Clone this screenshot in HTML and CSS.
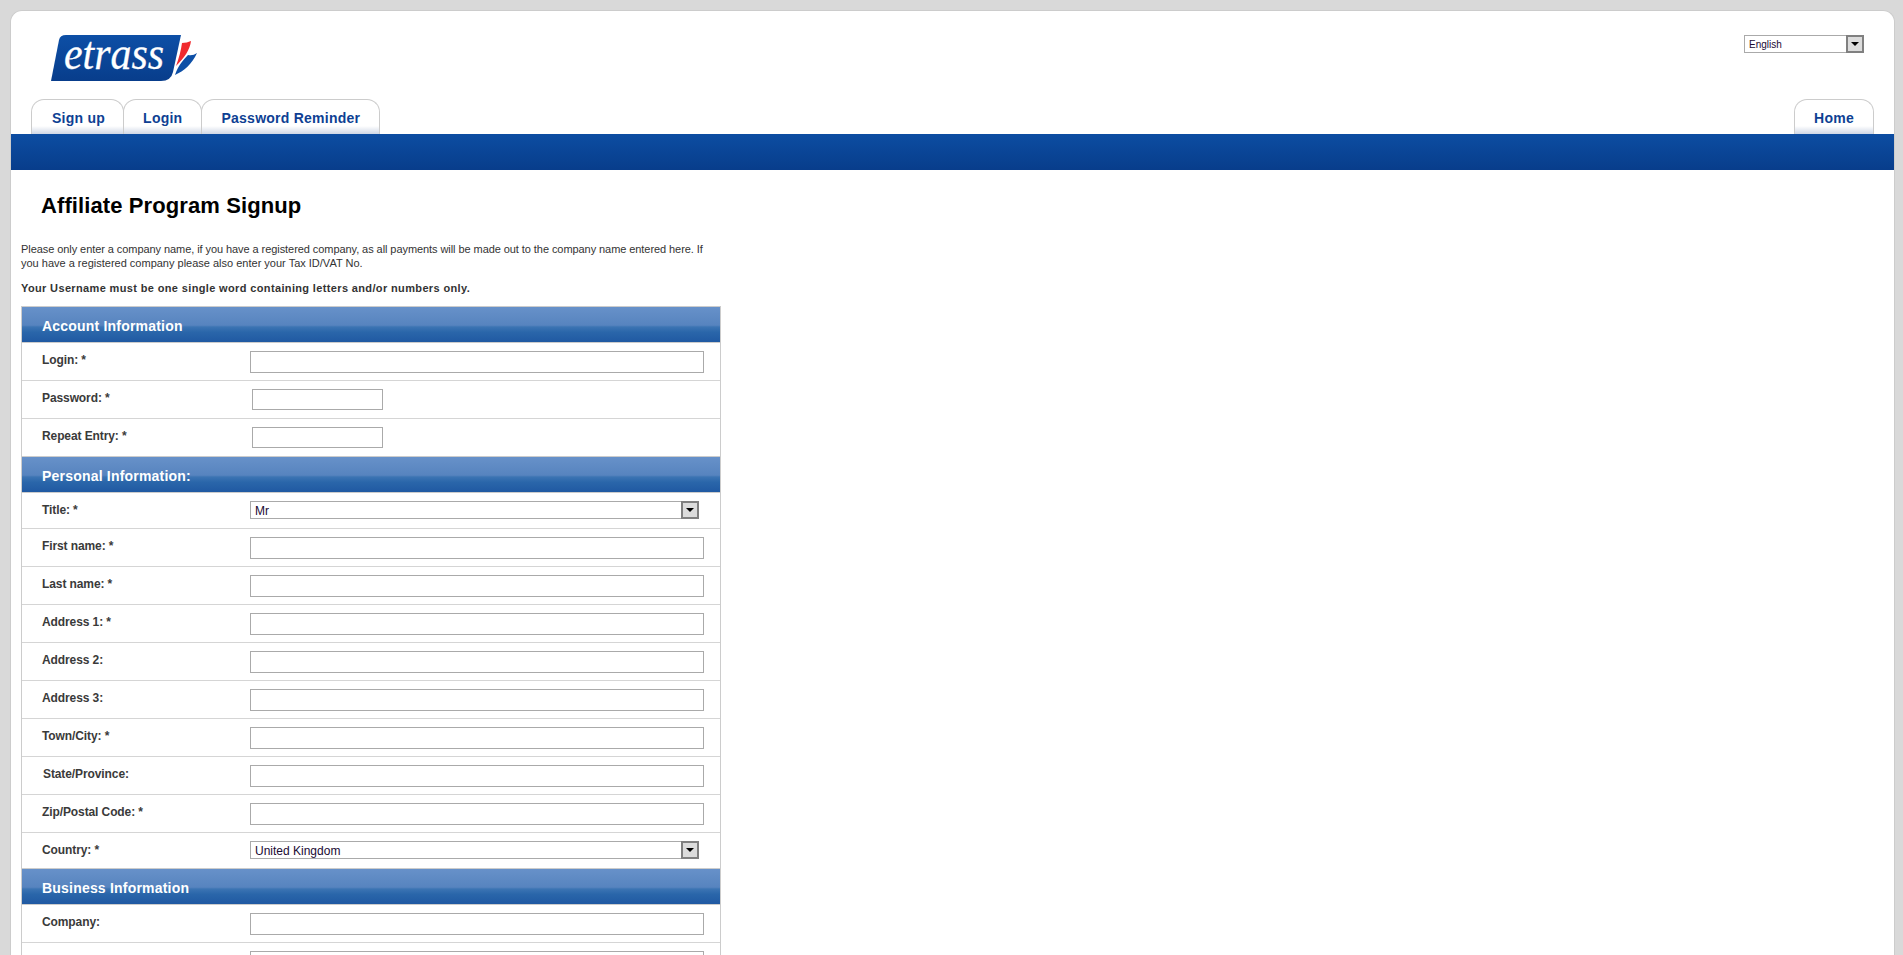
FILE: index.html
```html
<!DOCTYPE html>
<html lang="en">
<head>
    <meta charset="utf-8">
    <title>Affiliate Program Signup</title>
    <link rel="stylesheet" href="styles.css">
</head>

<body>
<div class="page">
    <div class="header">
        <div class="headerTop">
            <a class="logo" href="#">
                <svg width="147" height="60" viewBox="0 -10 147 60">
                    <defs>
                        <linearGradient id="logoBlue" x1="0" y1="0" x2="0" y2="1">
                            <stop offset="0" stop-color="#0d4fa6"/>
                            <stop offset="1" stop-color="#083d8b"/>
                        </linearGradient>
                    </defs>
                    <path d="M0 47 L8 6 Q9 1 15 1 L130 1 L122 38 Q120 47 110 47 Z" fill="url(#logoBlue)"/>
                    <text x="13" y="35" class="logoText" textLength="100" lengthAdjust="spacingAndGlyphs">etrass</text>
                    <path d="M125 32 C128 24 130 16 131 9 Q136 9 140 7 C139 16 133 24 125 32 Z" fill="#f02a2e"/>
                    <path d="M124 41 C127 32 132 26 137 21 Q142 22 146 19 C141 30 133 37 124 41 Z" fill="#0d4fa6"/>
                </svg>
            </a>
            <div class="selectBox langSelect">
                <select>
                    <option>English</option>
                </select>
                <span class="selectArrow"></span>
            </div>
        </div>
        <div class="tabs">
            <a class="tab" href="#">Sign up</a>
            <a class="tab" href="#">Login</a>
            <a class="tab" href="#">Password Reminder</a>
            <a class="tab tabHome" href="#">Home</a>
        </div>
    </div>
    <div class="band"></div>

    <div class="content">
        <h1>Affiliate Program Signup</h1>
        <p class="intro">Please only enter a company name, if you have a registered company, as all payments will be made out to the company name entered here. If you have a registered company please also enter your Tax ID/VAT No.</p>
        <p class="intro introBold">Your Username must be one single word containing letters and/or numbers only.</p>

        <form class="signup">
            <h2>Account Information</h2>
            <div class="row">
                <label for="login">Login: *</label>
                <input type="text" id="login">
            </div>
            <div class="row">
                <label for="password">Password: *</label>
                <input type="password" id="password" class="short">
            </div>
            <div class="row lastRow">
                <label for="repeat">Repeat Entry: *</label>
                <input type="password" id="repeat" class="short">
            </div>

            <h2>Personal Information:</h2>
            <div class="row rowSelect">
                <label for="title">Title: *</label>
                <div class="selectBox">
                    <select id="title">
                        <option>Mr</option>
                    </select>
                    <span class="selectArrow"></span>
                </div>
            </div>
            <div class="row">
                <label for="first">First name: *</label>
                <input type="text" id="first">
            </div>
            <div class="row">
                <label for="last">Last name: *</label>
                <input type="text" id="last">
            </div>
            <div class="row">
                <label for="addr1">Address 1: *</label>
                <input type="text" id="addr1">
            </div>
            <div class="row">
                <label for="addr2">Address 2:</label>
                <input type="text" id="addr2">
            </div>
            <div class="row">
                <label for="addr3">Address 3:</label>
                <input type="text" id="addr3">
            </div>
            <div class="row">
                <label for="town">Town/City: *</label>
                <input type="text" id="town">
            </div>
            <div class="row">
                <label for="state" class="nudge">State/Province:</label>
                <input type="text" id="state">
            </div>
            <div class="row">
                <label for="zip">Zip/Postal Code: *</label>
                <input type="text" id="zip">
            </div>
            <div class="row rowSelect lastRow">
                <label for="country">Country: *</label>
                <div class="selectBox">
                    <select id="country">
                        <option>United Kingdom</option>
                    </select>
                    <span class="selectArrow"></span>
                </div>
            </div>

            <h2>Business Information</h2>
            <div class="row">
                <label for="company">Company:</label>
                <input type="text" id="company">
            </div>
            <div class="row">
                <label></label>
                <input type="text">
            </div>
        </form>
    </div>
</div>
</body>
</html>
```

FILE: styles.css
```css
html, body {
    height: 955px;
    overflow: hidden;
}

body {
    margin: 0;
    padding: 10px 8px 0 10px;
    box-sizing: border-box;
    background-color: #d9d9d9;
    font-family: "Liberation Sans", Arial, sans-serif;
    color: #333333;
}

.page {
    background-color: #ffffff;
    border: 1px solid #cccccc;
    border-bottom: none;
    border-radius: 12px 12px 0 0;
    min-height: 1200px;
}

.header {
    display: flex;
    flex-direction: column;
    height: 123px;
}

.headerTop {
    display: flex;
    flex: 1;
    justify-content: space-between;
    align-items: flex-start;
    padding: 23px 30px 0 40px;
}

.logo {
    display: block;
    height: 60px;
    margin-top: -10px;
}

.logoText {
    font-family: "Liberation Serif", serif;
    font-style: italic;
    font-size: 47px;
    fill: #ffffff;
    stroke: #ffffff;
    stroke-width: 0.3px;
}

.tabs {
    display: flex;
    padding: 0 20px;
}

.tab {
    height: 35px;
    box-sizing: border-box;
    padding: 10px 19px 0;
    border: 1px solid #cccccc;
    border-bottom: none;
    border-radius: 13px 13px 0 0;
    background: linear-gradient(to bottom, #ffffff 0, #ffffff 26px, #cfd7e6 100%);
    font-size: 14px;
    line-height: 16px;
    font-weight: bold;
    letter-spacing: 0.25px;
    color: #0e3f93;
    text-decoration: none;
}

.tab:first-child {
    padding: 10px 18px 0 20px;
}

.tab + .tab {
    margin-left: -1px;
}

.tabHome {
    margin-left: auto !important;
}

.band {
    height: 36px;
    background: linear-gradient(to bottom, #0c4da2, #083d8b);
}

.content {
    padding: 0 0 0 10px;
}

h1 {
    margin: 23px 0 0 20px;
    font-size: 22px;
    line-height: 26px;
    letter-spacing: 0.1px;
    color: #000000;
}

.intro {
    width: 695px;
    margin: 23px 0 0;
    font-size: 11px;
    line-height: 14px;
}

.intro::first-line {
    letter-spacing: -0.07px;
}

.introBold {
    margin-top: 11px;
    font-weight: bold;
    letter-spacing: 0.36px;
}

.introBold::first-line {
    letter-spacing: 0.36px;
}

.signup {
    width: 700px;
    box-sizing: border-box;
    margin-top: 11px;
    border: 1px solid #cccccc;
    border-top: none;
    border-bottom: none;
}

h2 {
    height: 37px;
    box-sizing: border-box;
    margin: 0 -1px;
    padding: 0 0 0 20px;
    border: 1px solid #cccccc;
    background: linear-gradient(to bottom, #6791c9 0, #5784bf 52%, #3c74b3 57%, #2a66aa 72%, #2059a2 100%);
    font-size: 14px;
    line-height: 38px;
    letter-spacing: 0.2px;
    color: #ffffff;
}

.row {
    display: flex;
    align-items: flex-start;
    height: 38px;
    box-sizing: border-box;
    padding: 8px 0 0 20px;
    border-bottom: 1px solid #d5d5d5;
}

.rowSelect {
    height: 36px;
}

.lastRow {
    border-bottom: none;
    height: 37px;
}

.rowSelect.lastRow {
    height: 35px;
}

label {
    flex: none;
    width: 208px;
    margin-top: 1px;
    font-size: 12px;
    line-height: 16px;
    font-weight: bold;
    letter-spacing: -0.1px;
    color: #3a3a3a;
}

.nudge {
    padding-left: 1px;
    width: 207px;
}

input {
    width: 454px;
    height: 22px;
    box-sizing: border-box;
    margin: 0;
    padding: 1px 4px;
    border: 1px solid #aaaaaa;
    background-color: #ffffff;
    outline: none;
}

input.short {
    width: 131px;
    height: 21px;
    margin-left: 2px;
}

.selectBox {
    position: relative;
    width: 449px;
    height: 18px;
}

.langSelect {
    width: 120px;
    margin-top: 1px;
}

.selectBox select {
    display: block;
    width: 100%;
    height: 100%;
    box-sizing: border-box;
    margin: 0;
    padding: 1px 0 0 4px;
    border: 1px solid #aaaaaa;
    border-radius: 0;
    appearance: none;
    background-color: #ffffff;
    font-family: "Liberation Sans", Arial, sans-serif;
    font-size: 12px;
    color: #1a0a33;
    outline: none;
}

.langSelect select {
    font-size: 10px;
}

.selectArrow {
    position: absolute;
    top: 0;
    right: 0;
    width: 18px;
    height: 18px;
    box-sizing: border-box;
    border: 2px solid #808080;
    background-color: #dcdcdc;
}

.selectArrow::after {
    content: "";
    position: absolute;
    left: 3px;
    top: 5px;
    border-style: solid;
    border-width: 4px 4px 0;
    border-color: #000000 transparent transparent;
}
```
